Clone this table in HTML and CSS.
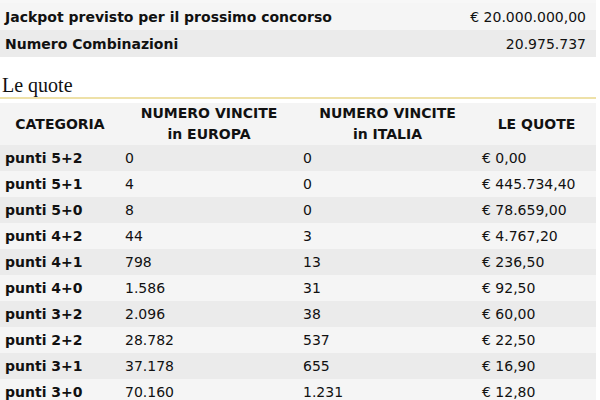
FILE: index.html
```html
<!DOCTYPE html>
<html lang="it">
<head>
<meta charset="utf-8">
<title>Le quote</title>
<link rel="stylesheet" href="styles.css">
</head>
<body>
<div class="page">
  <div class="info-wrap">
    <table class="info">
      <tr class="light"><th>Jackpot previsto per il prossimo concorso</th><td>€ 20.000.000,00</td></tr>
      <tr class="dark"><th>Numero Combinazioni</th><td>20.975.737</td></tr>
    </table>
  </div>

  <h2 class="title">Le quote</h2>

  <table class="quote">
    <colgroup>
      <col class="c1"><col class="c2"><col class="c3"><col class="c4">
    </colgroup>
    <thead>
      <tr>
        <th>CATEGORIA</th>
        <th>NUMERO VINCITE<br>in EUROPA</th>
        <th>NUMERO VINCITE<br>in ITALIA</th>
        <th>LE QUOTE</th>
      </tr>
    </thead>
    <tbody>
      <tr><th>punti 5+2</th><td>0</td><td>0</td><td>€ 0,00</td></tr>
      <tr><th>punti 5+1</th><td>4</td><td>0</td><td>€ 445.734,40</td></tr>
      <tr><th>punti 5+0</th><td>8</td><td>0</td><td>€ 78.659,00</td></tr>
      <tr><th>punti 4+2</th><td>44</td><td>3</td><td>€ 4.767,20</td></tr>
      <tr><th>punti 4+1</th><td>798</td><td>13</td><td>€ 236,50</td></tr>
      <tr><th>punti 4+0</th><td>1.586</td><td>31</td><td>€ 92,50</td></tr>
      <tr><th>punti 3+2</th><td>2.096</td><td>38</td><td>€ 60,00</td></tr>
      <tr><th>punti 2+2</th><td>28.782</td><td>537</td><td>€ 22,50</td></tr>
      <tr><th>punti 3+1</th><td>37.178</td><td>655</td><td>€ 16,90</td></tr>
      <tr><th>punti 3+0</th><td>70.160</td><td>1.231</td><td>€ 12,80</td></tr>
    </tbody>
  </table>
</div>
</body>
</html>
```

FILE: styles.css
```css
html, body {
  margin: 0;
  padding: 0;
  background: #ffffff;
}

.page {
  width: 596px;
  font-family: "DejaVu Sans", Verdana, sans-serif;
  font-size: 14px;
  color: #111;
}

table {
  width: 100%;
  border-collapse: collapse;
}

.info-wrap {
  padding-top: 3px;
  background: #f7f7f7;
}

.info th,
.info td {
  height: 27px;
  padding: 0 10px 0 5px;
  vertical-align: middle;
}

.info th {
  text-align: left;
  font-weight: bold;
}

.info td {
  text-align: right;
}

.light { background: #f5f5f5; }
.dark { background: #ebebeb; }

.title {
  margin: 17px 0 4px;
  padding: 0 0 0 2px;
  font-family: "Liberation Serif", "Times New Roman", serif;
  font-size: 20px;
  font-weight: normal;
  line-height: 23px;
  color: #111;
  border-bottom: 2px solid #eee1a8;
}

.c1 { width: 120px; }
.c2 { width: 178px; }
.c3 { width: 179px; }

.quote thead th {
  background: #f4f4f4;
  height: 42px;
  padding: 0;
  line-height: 21px;
  text-align: center;
  font-weight: bold;
}

.quote tbody th,
.quote tbody td {
  height: 26px;
  padding: 0 5px;
  text-align: left;
  vertical-align: middle;
}

.quote tbody th {
  font-weight: bold;
}

.quote tbody tr:nth-child(odd) { background: #ebebeb; }
.quote tbody tr:nth-child(even) { background: #f5f5f5; }
```
